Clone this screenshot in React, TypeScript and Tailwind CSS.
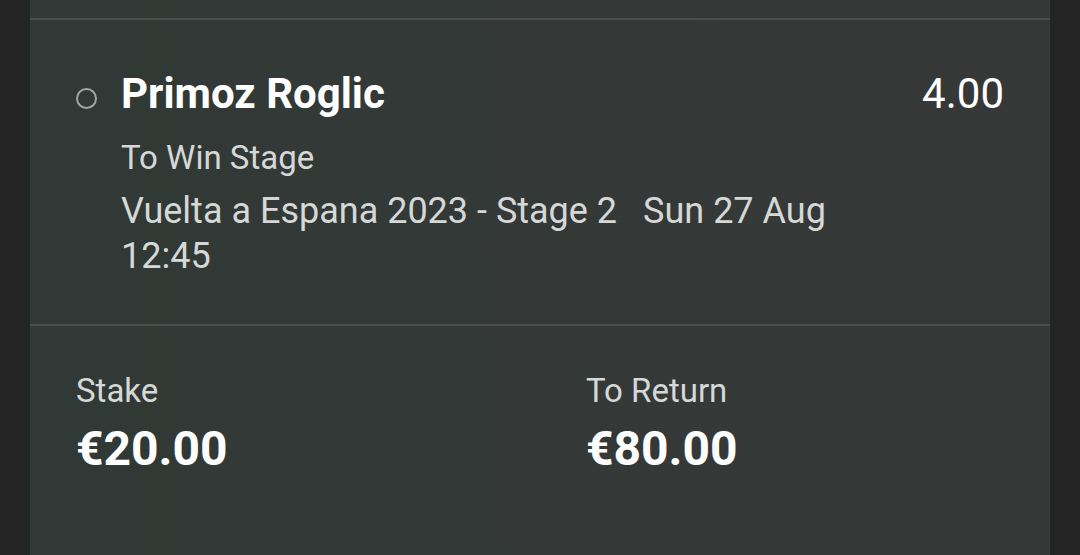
export default function App() {
  return (
    <div className="min-h-[555px] w-full bg-[#242424] flex justify-center font-['Roboto',sans-serif]">
      <div className="w-[1020px] h-[555px] overflow-hidden bg-gradient-to-r from-[#303935] via-[#343937] to-[#363837] flex flex-col">
        <div className="h-[18px] shrink-0" />
        <div className="h-[2px] bg-[#4a4f4d] shrink-0" />

        {/* Selection */}
        <div className="pl-[46px] pr-[46px] pt-[49px] pb-[45px] flex items-start">
          <span className="mt-[19px] block w-[21px] h-[21px] rounded-full border-2 border-[#a3a5a4] shrink-0" />
          <div className="ml-[24px] w-[760px]">
            <div className="text-[42px] leading-[50px] font-bold text-white">Primoz Roglic</div>
            <div className="mt-[16px] text-[33px] leading-[45px] text-[#d6d8d7]">To Win Stage</div>
            <div className="mt-[9px] text-[36px] leading-[45px] text-[#d6d8d7]">
              <div className="flex gap-[26px]">
                <span>Vuelta a Espana 2023 - Stage 2</span>
                <span>Sun 27 Aug</span>
              </div>
              <div>12:45</div>
            </div>
          </div>
          <div className="ml-auto text-[42px] leading-[50px] text-white">4.00</div>
        </div>

        <div className="h-[2px] bg-[#4a4f4d] shrink-0" />

        {/* Stake / Return */}
        <div className="pl-[46px] pt-[42px] flex">
          <div className="w-[510px]">
            <div className="text-[33px] leading-[45px] text-[#d6d8d7]">Stake</div>
            <div className="mt-[8px] text-[48px] leading-[56px] font-bold text-white">€20.00</div>
          </div>
          <div>
            <div className="text-[33px] leading-[45px] text-[#d6d8d7]">To Return</div>
            <div className="mt-[8px] text-[48px] leading-[56px] font-bold text-white">€80.00</div>
          </div>
        </div>
      </div>
    </div>
  )
}
